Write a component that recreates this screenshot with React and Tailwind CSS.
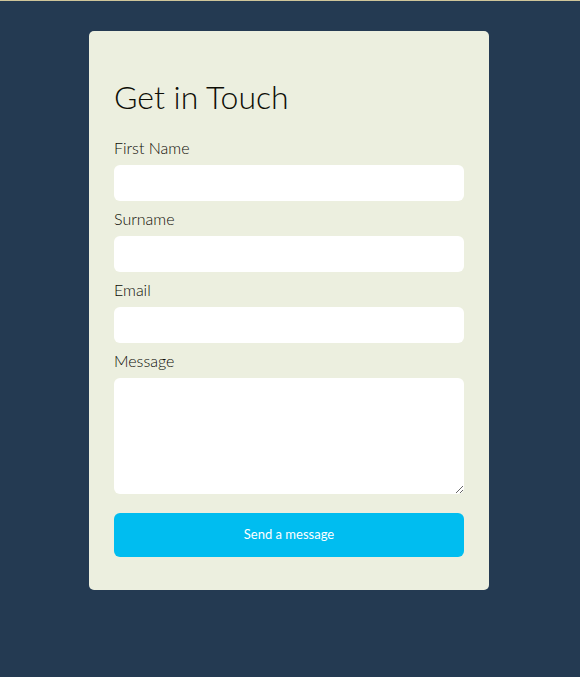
export default function App() {
  const fields = [
    { label: 'First Name', type: 'text' },
    { label: 'Surname', type: 'text' },
    { label: 'Email', type: 'email' },
  ];

  return (
    <div className="min-h-[677px] bg-[#243a52] border-t border-[#cfc59a] pt-[30px] font-['Lato','Open_Sans',sans-serif]">
      <div className="ml-[89px] w-[400px] rounded-[5px] bg-[#ecefdf] px-[25px] pt-[46px] pb-[33px] text-[#0d0d05]">
        <h1 className="text-[32px] font-light leading-[40px] mb-[21px]">Get in Touch</h1>
        <form onSubmit={e => e.preventDefault()}>
          {fields.map(f => (
            <div key={f.label} className="mb-[8px]">
              <label className="block text-[16px] font-light leading-[20px] mb-[7px]">{f.label}</label>
              <input type={f.type} className="block w-full h-[36px] rounded-[6px] bg-white outline-none px-3" />
            </div>
          ))}
          <div>
            <label className="block text-[16px] font-light leading-[20px] mb-[7px]">Message</label>
            <textarea className="block w-full h-[116px] rounded-[6px] bg-white outline-none px-3 py-2" />
          </div>
          <button type="submit" className="mt-[19px] block w-full h-[44px] rounded-[6px] bg-[#00bdf0] text-white text-[13px] font-normal">
            Send a message
          </button>
        </form>
      </div>
    </div>
  );
}
